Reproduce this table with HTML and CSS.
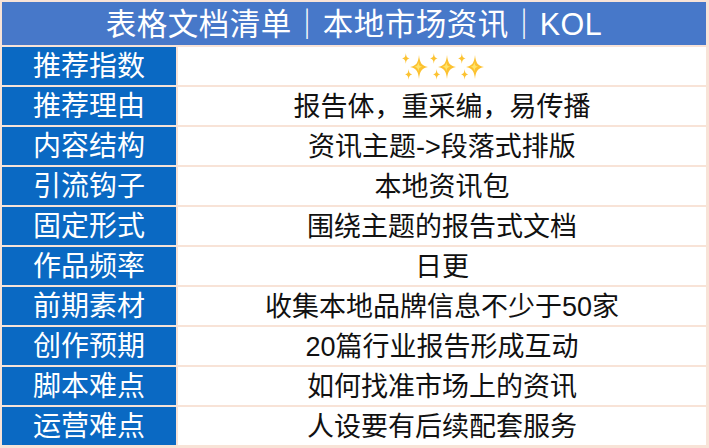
FILE: index.html
```html
<!DOCTYPE html>
<html lang="zh-CN">
<head>
<meta charset="utf-8">
<title>表格文档清单</title>
<link rel="stylesheet" href="styles.css">
</head>
<body>
<div class="sheet">
  <div class="head">表格文档清单｜本地市场资讯｜KOL</div>

  <div class="key">推荐指数</div>
  <div class="val">
    <svg class="sparkles" width="84" height="28" viewBox="0 0 84 28" aria-label="✨✨✨">
      <defs>
        <path id="st" d="M12 0 C13 8 16 11 24 12 C16 13 13 16 12 24 C11 16 8 13 0 12 C8 11 11 8 12 0Z"/>
        <g id="grp">
          <use href="#st" transform="translate(8 2) scale(0.75 1.0)" fill="#fcc230"/>
          <use href="#st" transform="translate(0 0) scale(0.32 0.45)" fill="#fcc230"/>
          <use href="#st" transform="translate(3 16) scale(0.3 0.45)" fill="#fcc230"/>
          <use href="#st" transform="translate(12.5 9) scale(0.32 0.4)" fill="#ffe46a"/>
        </g>
      </defs>
      <use href="#grp" x="0" y="0"/>
      <use href="#grp" x="28" y="0"/>
      <use href="#grp" x="56" y="0"/>
    </svg>
  </div>

  <div class="key">推荐理由</div>
  <div class="val">报告体，重采编，易传播</div>

  <div class="key">内容结构</div>
  <div class="val">资讯主题-&gt;段落式排版</div>

  <div class="key">引流钩子</div>
  <div class="val">本地资讯包</div>

  <div class="key">固定形式</div>
  <div class="val">围绕主题的报告式文档</div>

  <div class="key">作品频率</div>
  <div class="val">日更</div>

  <div class="key">前期素材</div>
  <div class="val">收集本地品牌信息不少于50家</div>

  <div class="key">创作预期</div>
  <div class="val">20篇行业报告形成互动</div>

  <div class="key">脚本难点</div>
  <div class="val">如何找准市场上的资讯</div>

  <div class="key">运营难点</div>
  <div class="val">人设要有后续配套服务</div>
</div>
</body>
</html>
```

FILE: styles.css
```css
html, body {
  margin: 0;
  padding: 0;
  background: #f8e3d7;
}

.sheet {
  box-sizing: border-box;
  width: 709px;
  height: 448px;
  padding: 2px 3px 3px 2px;
  display: grid;
  grid-template-columns: 174px 1fr;
  grid-template-rows: 43px repeat(10, 1fr);
  gap: 2px;
  font-family: "Liberation Sans", "Noto Sans CJK SC", sans-serif;
}

.head {
  grid-column: 1 / -1;
  background: #4778c9;
  color: #ffffff;
  font-size: 30.5px;
  display: flex;
  align-items: center;
  justify-content: center;
  letter-spacing: 0.5px;
  line-height: 1;
  padding-top: 1px;
}

.key {
  background: #0a69c3;
  color: #ffffff;
  font-size: 28px;
  display: flex;
  align-items: center;
  justify-content: center;
  line-height: 1;
  padding-top: 2px;
}

.val {
  background: #ffffff;
  color: #111111;
  font-size: 27px;
  display: flex;
  align-items: center;
  justify-content: center;
  line-height: 1;
  padding-top: 2px;
}

.sparkles {
  display: block;
  margin-left: 4px;
}
```
